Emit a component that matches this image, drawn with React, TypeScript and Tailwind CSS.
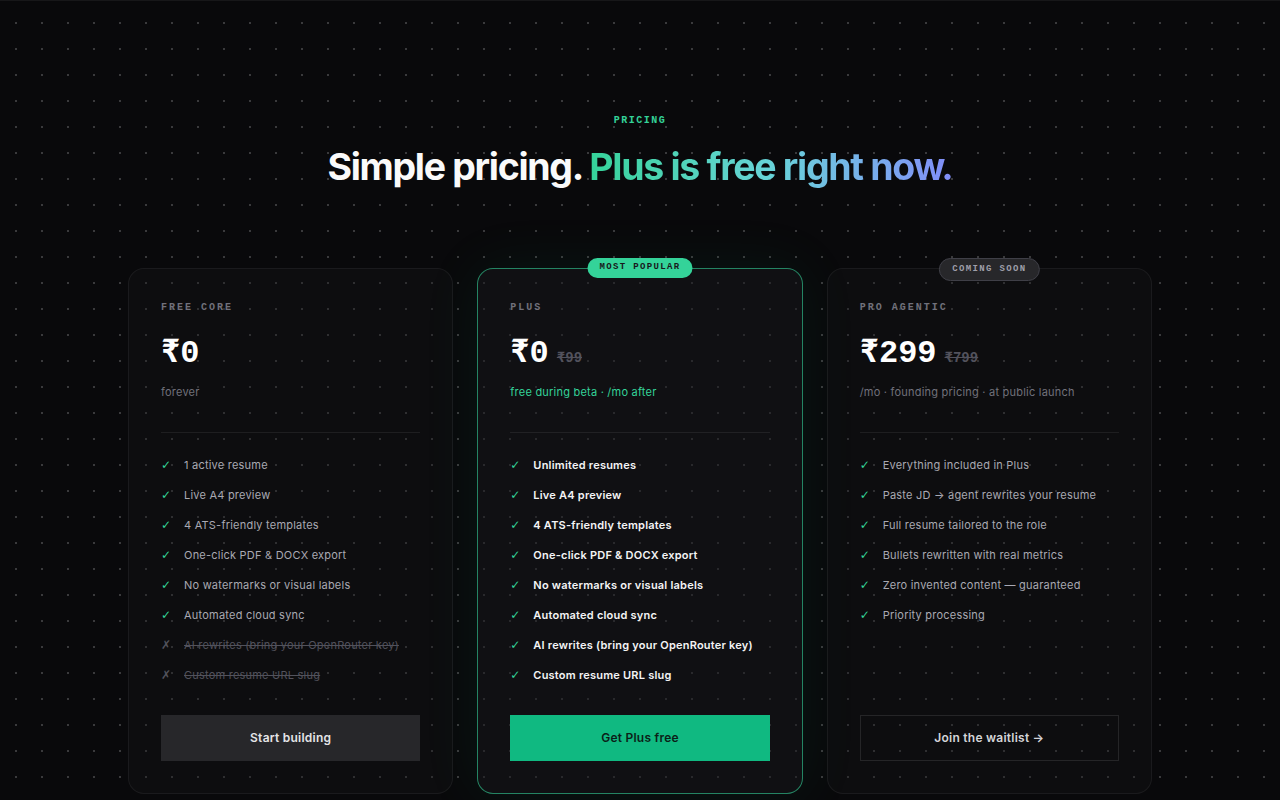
import React from "react";

type Feature = { text: string; off?: boolean };

type Plan = {
  id: string;
  label: string;
  price: string;
  was?: string;
  note: string;
  noteClass: string;
  features: Feature[];
  featureClass: string;
  cta: string;
  ctaClass: string;
  cardClass: string;
  badge?: React.ReactNode;
};

const PLANS: Plan[] = [
  {
    id: "free",
    label: "FREE CORE",
    price: "₹0",
    note: "forever",
    noteClass: "text-zinc-500",
    features: [
      { text: "1 active resume" },
      { text: "Live A4 preview" },
      { text: "4 ATS-friendly templates" },
      { text: "One-click PDF & DOCX export" },
      { text: "No watermarks or visual labels" },
      { text: "Automated cloud sync" },
      { text: "AI rewrites (bring your OpenRouter key)", off: true },
      { text: "Custom resume URL slug", off: true },
    ],
    featureClass: "text-[#a9a9b2]",
    cta: "Start building",
    ctaClass: "bg-[#27272a] text-zinc-200 hover:bg-zinc-700",
    cardClass: "border-white/[0.06] bg-zinc-900/30",
  },
  {
    id: "plus",
    label: "PLUS",
    price: "₹0",
    was: "₹99",
    note: "free during beta · /mo after",
    noteClass: "text-[#34d399]",
    features: [
      { text: "Unlimited resumes" },
      { text: "Live A4 preview" },
      { text: "4 ATS-friendly templates" },
      { text: "One-click PDF & DOCX export" },
      { text: "No watermarks or visual labels" },
      { text: "Automated cloud sync" },
      { text: "AI rewrites (bring your OpenRouter key)" },
      { text: "Custom resume URL slug" },
    ],
    featureClass: "text-zinc-100 font-semibold",
    cta: "Get Plus free",
    ctaClass: "bg-[#10b981] text-[#0b1f18] hover:bg-[#34d399]",
    cardClass:
      "border-[#34d399]/60 bg-zinc-900/50 shadow-[0_0_60px_rgba(16,185,129,0.08)]",
    badge: (
      <span className="absolute -top-[11px] left-1/2 -translate-x-1/2 h-5 px-3 flex items-center rounded-full bg-[#34d399] text-zinc-900 font-mono text-[9px] font-bold tracking-[0.15em] whitespace-nowrap">
        MOST POPULAR
      </span>
    ),
  },
  {
    id: "pro",
    label: "PRO AGENTIC",
    price: "₹299",
    was: "₹799",
    note: "/mo · founding pricing · at public launch",
    noteClass: "text-zinc-500",
    features: [
      { text: "Everything included in Plus" },
      { text: "Paste JD → agent rewrites your resume" },
      { text: "Full resume tailored to the role" },
      { text: "Bullets rewritten with real metrics" },
      { text: "Zero invented content — guaranteed" },
      { text: "Priority processing" },
    ],
    featureClass: "text-[#a9a9b2]",
    cta: "Join the waitlist →",
    ctaClass:
      "border border-white/10 text-zinc-300 bg-transparent hover:bg-white/5",
    cardClass: "border-white/[0.06] bg-zinc-900/30",
    badge: (
      <span className="absolute -top-[11px] left-1/2 -translate-x-1/2 h-[23px] px-3 flex items-center rounded-full bg-zinc-800 border border-zinc-700 text-zinc-400 font-mono text-[9px] font-bold tracking-[0.15em] whitespace-nowrap">
        COMING SOON
      </span>
    ),
  },
];

export default function App() {
  return (
    <div
      className="min-h-screen bg-[#09090b] border-t border-white/[0.06] font-['Inter',sans-serif] text-zinc-100"
      style={{
        backgroundImage:
          "radial-gradient(circle at center, rgba(255,255,255,0.2) 1px, transparent 1.2px)",
        backgroundSize: "26px 26px",
        backgroundPosition: "3px 9px",
      }}
    >
      <section className="max-w-5xl mx-auto pt-[112px] pb-24">
        {/* Heading */}
        <div className="flex flex-col items-center text-center">
          <p className="font-mono text-[10px] font-bold tracking-[0.15em] text-[#34d399]">
            PRICING
          </p>
          <h2 className="mt-[15px] text-[37.5px] leading-[48px] font-bold tracking-[-0.035em] text-zinc-50">
            Simple pricing.{" "}
            <span className="bg-gradient-to-r from-[#34d399] via-[#67d3d8] to-[#818cf8] bg-clip-text text-transparent">
              Plus is free right now.
            </span>
          </h2>
        </div>

        {/* Plans */}
        <div className="mt-[77px] grid grid-cols-3 gap-6">
          {PLANS.map((plan) => (
            <div
              key={plan.id}
              className={`relative flex flex-col rounded-2xl border p-8 ${plan.cardClass}`}
            >
              {plan.badge}

              <p className="font-mono text-[10px] leading-[14px] font-bold tracking-[0.2em] text-zinc-500">
                {plan.label}
              </p>

              <div className="mt-[23px] flex items-baseline gap-2">
                <span className="font-mono text-[32px] leading-none font-bold text-white">
                  {plan.price}
                </span>
                {plan.was && (
                  <span className="font-mono text-sm font-bold text-zinc-600 line-through">
                    {plan.was}
                  </span>
                )}
              </div>

              <p className={`mt-[14px] text-[11px] leading-4 tracking-[0.02em] ${plan.noteClass}`}>
                {plan.note}
              </p>

              <div className="mt-8 h-px bg-white/[0.07]"></div>

              <ul className="mt-[23px] mb-[31px] flex flex-col gap-3">
                {plan.features.map((f) => (
                  <li key={f.text} className="flex items-center gap-3 text-[11px] leading-[18px] tracking-[0.02em]">
                    {f.off ? (
                      <span className="w-[11px] font-['DejaVu_Sans',sans-serif] text-zinc-600 text-[12px] leading-[18px]">✗</span>
                    ) : (
                      <span className="w-[11px] font-['DejaVu_Sans',sans-serif] text-[#34d399] text-[12px] leading-[18px]">✓</span>
                    )}
                    <span
                      className={
                        f.off ? "text-zinc-600 line-through" : plan.featureClass
                      }
                    >
                      {f.text}
                    </span>
                  </li>
                ))}
              </ul>

              <button
                className={`mt-auto h-[46px] w-full text-xs font-semibold tracking-[0.02em] transition-colors ${plan.ctaClass}`}
              >
                {plan.cta}
              </button>
            </div>
          ))}
        </div>
      </section>
    </div>
  );
}
